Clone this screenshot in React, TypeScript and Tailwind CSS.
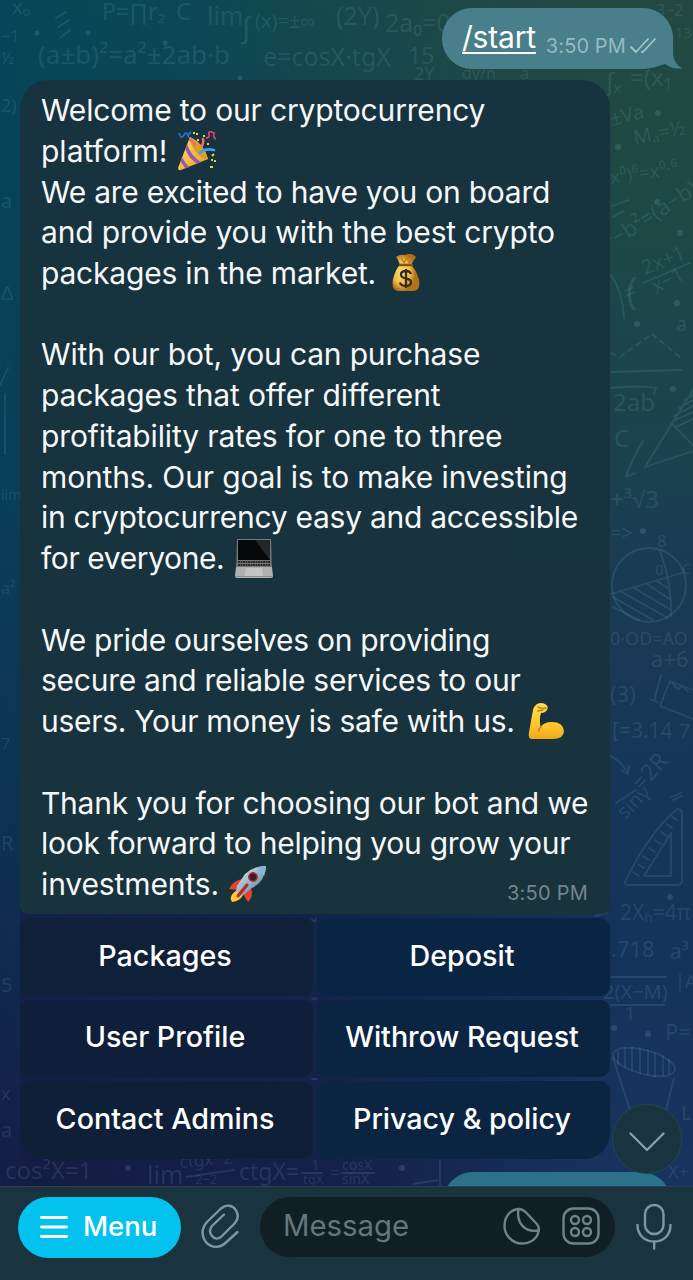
import React from "react";

type Doodle = [x: number, y: number, size: number, text: string, rotate?: number];

const doodles: Doodle[] = [
  [102, 20, 23, "P=∏r₂"],
  [176, 20, 24, "C"],
  [207, 25, 25, "lim"],
  [242, 38, 30, "∫"],
  [255, 28, 20, "(x)=±∞"],
  [336, 25, 25, "(2Y)"],
  [385, 32, 25, "2a₀=0"],
  [38, 64, 26, "(a±b)²=a²±2ab·b"],
  [263, 66, 25, "e=cosX·tgX"],
  [408, 64, 23, "15"],
  [414, 80, 18, "2Y"],
  [462, 79, 16, "dy/n"],
  [520, 79, 16, "a"],
  [630, 86, 24, "=(x₁"],
  [606, 91, 26, "∫ₓ"],
  [675, 38, 15, "13"],
  [656, 16, 16, "3−2"],
  [612, 126, 20, "±Va", -14],
  [635, 145, 20, "Mₐ=½", -12],
  [611, 184, 19, "x⁰)⁶=x⁰·⁶", -8],
  [611, 250, 22, "²−b²=(a−b)", -33],
  [626, 304, 38, "("],
  [645, 275, 20, "2x+1", -22],
  [656, 294, 20, "x−1", -28],
  [676, 331, 20, "a"],
  [613, 411, 24, "2ab"],
  [614, 447, 24, "C"],
  [610, 508, 24, "+³√3"],
  [610, 540, 20, "=>"],
  [657, 547, 17, "8"],
  [682, 574, 14, "C"],
  [655, 575, 15, "0"],
  [610, 645, 18, "0·OD=AO"],
  [651, 667, 22, "a+6"],
  [610, 702, 22, "(3)"],
  [612, 738, 21, "[=3.14"],
  [679, 738, 20, "7"],
  [642, 792, 23, "=2R", -48],
  [625, 820, 20, "sinγ", -45],
  [620, 920, 21, "2Xₕ=4π"],
  [611, 957, 22, ".718"],
  [670, 959, 21, "a³"],
  [603, 999, 20, "2(X−M)"],
  [675, 988, 18, "|A"],
  [625, 1020, 18, "1"],
  [665, 1040, 22, "P="],
  [668, 1178, 18, "X+"],
  [681, 1120, 20, "L"],
  [5, 1179, 24, "cos²X=1"],
  [147, 1184, 25, "lim"],
  [180, 1168, 17, "ctgx−2", -5],
  [195, 1184, 13, "2−2"],
  [239, 1180, 23, "ctgX="],
  [311, 1170, 15, "1"],
  [303, 1184, 13, "tgX"],
  [330, 1179, 18, "="],
  [342, 1170, 14, "cosX"],
  [342, 1184, 14, "sinX"],
  [12, 14, 20, "xₒ"],
  [1, 42, 16, "−1"],
  [1, 64, 17, "½"],
  [1, 112, 18, "2)"],
  [1, 208, 20, "a"],
  [1, 300, 20, "∆"],
  [1, 500, 14, "lim"],
  [1, 594, 16, "a²"],
  [1, 750, 16, "7"],
  [1, 850, 20, "R"],
  [1, 992, 20, "5"],
  [1, 1100, 18, "x"],
  [1, 1137, 20, "a"],
];

function Wallpaper() {
  return (
    <svg className="absolute inset-0 h-full w-full" viewBox="0 0 693 1280" aria-hidden="true">
      <defs>
        <linearGradient id="base" x1="0" y1="0" x2="0" y2="1">
          <stop offset="0" stopColor="#05485a" />
          <stop offset="0.4" stopColor="#0a3e58" />
          <stop offset="0.7" stopColor="#102e51" />
          <stop offset="0.93" stopColor="#161c45" />
        </linearGradient>
        <linearGradient id="side" x1="0" y1="0" x2="0" y2="1">
          <stop offset="0" stopColor="#234941" />
          <stop offset="0.18" stopColor="#1d4846" />
          <stop offset="0.36" stopColor="#1b414e" />
          <stop offset="0.5" stopColor="#193956" />
          <stop offset="0.7" stopColor="#14345a" />
          <stop offset="0.93" stopColor="#17335f" />
        </linearGradient>
        <linearGradient id="fade" x1="0" y1="0" x2="1" y2="0">
          <stop offset="0" stopColor="#000" />
          <stop offset="0.25" stopColor="#333" />
          <stop offset="0.7" stopColor="#ddd" />
          <stop offset="0.85" stopColor="#fff" />
        </linearGradient>
        <linearGradient id="dusk" x1="0" y1="0" x2="1" y2="0">
          <stop offset="0" stopColor="#141a42" stopOpacity="0.5" />
          <stop offset="0.45" stopColor="#141c42" stopOpacity="0.6" />
          <stop offset="0.8" stopColor="#141c42" stopOpacity="0.15" />
          <stop offset="0.9" stopColor="#141c42" stopOpacity="0" />
        </linearGradient>
        <mask id="blend"><rect width="693" height="1280" fill="url(#fade)" /></mask>
      </defs>
      <rect width="693" height="1280" fill="url(#base)" />
      <rect width="693" height="1280" fill="url(#side)" mask="url(#blend)" />
      <rect x="20" y="900" width="673" height="380" fill="url(#dusk)" />
      <g fill="#79b5bd" fillOpacity="0.17" className="font-['Noto_Sans',sans-serif]">
        {doodles.map(([x, y, size, text, rotate = 0], i) => (
          <text key={i} x={x} y={y} fontSize={size} transform={`rotate(${rotate} ${x} ${y})`}>{text}</text>
        ))}
      </g>
      <g fill="none" stroke="#79b5d0" strokeOpacity="0.16" strokeWidth="1.8" strokeLinecap="round" strokeLinejoin="round">
        <path d="M56 18l10-6M58 27l11-7M61 37l9-7M612 206l17-6M613 217l10-6M643 283l47-20M611 275q12 17 13 43M625 291l8-4M626 296l8-4" />
        <path d="M611 353l9 4 32-23 28 23" strokeDasharray="5 5" />
        <path d="M611 372l70-2M611 388q30-3 45 0l-2 6M643 441q-9 14-17 36m2-7-2 7 9-4" />
        <path d="M693 390L645 467l48-16M671 423l22 22M674 416l19-10M679 408l14-8M684 400l9-5M673 421l20-9M676 427l17-8" />
        <circle cx="649" cy="585" r="37" />
        <path d="M611 594l71-21M660 551q12 32 11 65M634 588l37 22M620 591l48 27M647 584l24 16M657 581l12 8M613 597l40 23M613 607l26 13" />
        <path d="M693 690l-23-9-10 25 33 13M661 675l-7 26m-4-2 7 3M671 682l7 7 5-3 5 6" />
        <path d="M611 756q12 7 17 18l-6-3m6 3 1-8M616 803l20-13M671 797l10-4M673 800l9-4" />
        <path d="M625 882q23-48 52-73q5 0 5 5v66q0 5-5 5h-48q-5 0-4-3zM644 876l27-43v43z" />
        <path d="M633 872l6 4M638 864l6 4M643 856l6 4M649 848l6 4M655 840l6 4M661 832l6 4M667 824l5 4M672 817l5 3" />
        <path d="M611 977h55M611 1005h53" />
        <ellipse cx="644" cy="1062" rx="32" ry="12" transform="rotate(15 644 1062)" />
        <path d="M618 1051v13M625 1048v19M632 1047v23M640 1048v25M648 1050v25M655 1053v24M663 1056v20M669 1060v14M674 1078l-11 44M613 1058l18 55" />
        <path d="M8 368l-8 17M5 394v60M186 1177l48-7M302 1173h20M342 1173h32M414 1184l24-4M440 1160v28" />
        <path d="M312 919q3 5 4 0M312 998q3 3 4 0M312 1079h5M595 916l12-3" />
      </g>
      <g fill="#79b5c0" fillOpacity="0.2">
        <circle cx="37" cy="33" r="2.5" /><circle cx="88" cy="33" r="2.5" /><circle cx="165" cy="43" r="2.5" /><circle cx="240" cy="78" r="2.5" />
        <circle cx="658" cy="113" r="3" /><circle cx="618" cy="147" r="3" /><circle cx="657" cy="202" r="3" />
        <circle cx="680" cy="233" r="3" /><circle cx="677" cy="303" r="3" /><circle cx="637" cy="324" r="3" />
        <circle cx="673" cy="389" r="3" /><circle cx="643" cy="531" r="3" /><circle cx="670" cy="897" r="3" />
        <circle cx="614" cy="1028" r="3" /><circle cx="648" cy="1034" r="3" /><circle cx="128" cy="1168" r="3" />
        <circle cx="402" cy="1168" r="3" />
      </g>
    </svg>
  );
}

function PartyPopper() {
  return (
    <svg className="h-[40px] w-[40px]" viewBox="0 0 40 40">
      <defs><linearGradient id="cone" x1="0" y1="0" x2="1" y2="1"><stop stopColor="#ffe16b" /><stop offset="1" stopColor="#e79b1b" /></linearGradient></defs>
      <path d="M13 6L1 37q0 3 3 2l27-11Q27 13 13 6z" fill="url(#cone)" />
      <path d="M13 6Q27 12 31 28q-5 2-12-7T13 6z" fill="#d99d30" />
      <path d="M10 13q4 12 14 18l-4 1.500Q11 27 8.500 18zM5 26q3 6 7 10l-3.500 1.500-5-7z" fill="#9855b8" />
      <path d="M18 14q-2-4-5-5M25 15q2-4 1-7" fill="none" stroke="#f46a70" strokeWidth="2.500" strokeLinecap="round" />
      <path d="M23 22q5-5 14-3" fill="none" stroke="#469bec" strokeWidth="2.800" strokeLinecap="round" />
      <path d="M2 2q2 7 5 2t5 3M10 5l4-4" fill="none" stroke="#2871c3" strokeWidth="1.800" />
      <path d="M29 7q4 0 3-4t5-1q-1 5 2 6" fill="none" stroke="#d84372" strokeWidth="1.800" />
      <path d="M19 3h2M20 9h2M35 25l2-2M34 29h2M33 36h3M30 13h2" stroke="#f7cf45" strokeWidth="2" />
      <path d="M37 30h2M16 2h2M26 5h2" stroke="#b4e16d" strokeWidth="2" />
    </svg>
  );
}

function MoneyBag() {
  return (
    <svg className="h-[38px] w-[28px]" viewBox="0 0 28 38">
      <defs><radialGradient id="bag" cx=".35" cy=".5"><stop stopColor="#ffe37a" /><stop offset=".65" stopColor="#edba42" /><stop offset="1" stopColor="#ad721a" /></radialGradient></defs>
      <path d="M8 11Q6 5 4 3q4-3 9-2 6-3 11 2-2 3-5 8 5 4 8 15 2 11-6 11H6Q-1 36 1 25 4 14 8 11z" fill="url(#bag)" />
      <path d="M8 11h12" stroke="#875211" strokeWidth="2.500" strokeLinecap="round" />
      <path d="M9 4l3 5 3-6 2 6 3-5" fill="none" stroke="#bc7e25" strokeWidth="1.300" />
      <path d="M19 20q-1-3-5-3-5 0-5 3.500 0 3 5 4t5 3.500q0 4-5 4-5 0-6-3.500M14 15v19" fill="none" stroke="#392a20" strokeWidth="2.300" />
    </svg>
  );
}

function Laptop() {
  return (
    <svg className="h-[40px] w-[38px]" viewBox="0 0 38 40">
      <path d="M2 1h34l1 38H1z" fill="#777a7d" />
      <path d="M3 2h32v20H3z" fill="#07080a" />
      <path d="M20 2h15v20z" fill="#242528" />
      <path d="M3 22h32l2 7H1z" fill="#777" />
      <path d="M3 24h32M3 27h32" stroke="#292a2d" strokeWidth="2" strokeDasharray="2 .5" />
      <path d="M1 29h36l1 9q0 2-2 2H2q-2 0-2-2z" fill="#b0b0b1" />
      <path d="M11 30h16l1 8H10z" fill="#c4c4c5" />
      <path d="M1 38.500h36" stroke="#8c8c8e" />
    </svg>
  );
}

function Biceps() {
  return (
    <svg className="h-[38px] w-[37px]" viewBox="0 0 37 38">
      <defs><linearGradient id="arm" x1="0" y1="0" x2="0" y2="1"><stop stopColor="#ffdc50" /><stop offset=".6" stopColor="#ffc72e" /><stop offset="1" stopColor="#efa71e" /></linearGradient></defs>
      <path d="M9 2q4-2 8 0 4 2 2 6-2 3-6 3-2 5-.5 14Q16 20 24 20q11 0 12 9 0 7-10 8H3Q0 36 1 30L5 8q1-4 4-6z" fill="url(#arm)" />
      <path d="M10 5q4 2 8 1M10 9l5-1M13 25q-3 2-2 4" fill="none" stroke="#c57d1b" strokeWidth="1.400" strokeLinecap="round" />
    </svg>
  );
}

function RocketEmoji() {
  return (
    <svg className="h-[38px] w-[38px]" viewBox="0 0 38 38">
      <defs><linearGradient id="hull" x1="0" y1="0" x2="1" y2="1"><stop stopColor="#e5f1f7" /><stop offset=".55" stopColor="#8faec2" /><stop offset="1" stopColor="#406983" /></linearGradient></defs>
      <path d="M14 14Q4 15 0 24l9 1zM14 29l8-6q3 8-3 14z" fill="#e6422d" />
      <path d="M8 25l6 5q-3 6-11 7Q-1 31 8 25z" fill="#ffca36" />
      <path d="M37 1Q24 1 16 9L8 21l-1 6 6 4 10-8Q36 17 37 1z" fill="url(#hull)" />
      <path d="M37 1q-5 0-9 2l7 8q2-5 2-10z" fill="#89b8d5" />
      <circle cx="24" cy="12" r="4.200" fill="#401c25" stroke="#a8323a" strokeWidth="1.500" />
      <path d="M18 20L9 31" stroke="#b92629" strokeWidth="3" strokeLinecap="round" />
    </svg>
  );
}

const lines: { text: string; track: string; emoji?: React.ReactNode }[] = [
  { text: "Welcome to our cryptocurrency", track: "tracking-[-0.17px]" },
  { text: "platform!", track: "tracking-[0px]", emoji: <PartyPopper /> },
  { text: "We are excited to have you on board", track: "tracking-[-0.25px]" },
  { text: "and provide you with the best crypto", track: "tracking-[-0.16px]" },
  { text: "packages in the market.", track: "tracking-[-0.2px] pr-[6px]", emoji: <MoneyBag /> },
  { text: "", track: "" },
  { text: "With our bot, you can purchase", track: "tracking-[-0.17px]" },
  { text: "packages that offer different", track: "tracking-[-0.13px]" },
  { text: "profitability rates for one to three", track: "tracking-[-0.14px]" },
  { text: "months. Our goal is to make investing", track: "tracking-[-0.14px]" },
  { text: "in cryptocurrency easy and accessible", track: "tracking-[-0.28px]" },
  { text: "for everyone.", track: "tracking-[-0.4px] pr-[1px]", emoji: <Laptop /> },
  { text: "", track: "" },
  { text: "We pride ourselves on providing", track: "tracking-[-0.29px]" },
  { text: "secure and reliable services to our", track: "tracking-[-0.26px]" },
  { text: "users. Your money is safe with us.", track: "tracking-[-0.29px] pr-[3px]", emoji: <Biceps /> },
  { text: "", track: "" },
  { text: "Thank you for choosing our bot and we", track: "tracking-[-0.25px]" },
  { text: "look forward to helping you grow your", track: "tracking-[-0.26px]" },
  { text: "investments.", track: "tracking-[-0.12px]", emoji: <RocketEmoji /> },
];

const actions = [
  { label: "Packages", shape: "rounded-[10px] bg-[#0f2039]" },
  { label: "Deposit", shape: "rounded-[10px] bg-[#0a2544]" },
  { label: "User Profile", shape: "rounded-[10px] bg-[#0f1f39]" },
  { label: "Withrow Request", shape: "rounded-[10px] bg-[#0a2442]" },
  { label: "Contact Admins", shape: "rounded-[10px] rounded-bl-[26px] bg-[#0f1f38]" },
  { label: "Privacy & policy", shape: "rounded-[10px] rounded-br-[26px] bg-[#0a2442]" },
];

export default function App() {
  return (
    <div className="relative flex h-[1280px] w-[693px] flex-col overflow-hidden font-['Inter','Liberation_Sans',sans-serif] text-white">
      <Wallpaper />

      <div className="relative mr-[20px] mt-[8px] flex h-[61px] w-[231px] shrink-0 items-center self-end rounded-[30px] bg-[#487f8a] pl-[20px]">
        <svg className="absolute -right-[9px] bottom-0 h-[34px] w-[30px]" viewBox="0 0 30 34">
          <path d="M21 0v19q1 10 9 14-8 2-17-4L0 33V0z" fill="#487f8a" />
        </svg>
        <span className="relative -mt-[4px] text-[30px] leading-none tracking-[-0.2px] underline decoration-2 underline-offset-[4px]">/start</span>
        <span className="relative ml-[10px] mt-[15px] whitespace-nowrap text-[20px] leading-none tracking-[0.1px] text-[#95bbc1]">3:50 PM</span>
        <svg className="relative ml-[4px] mt-[14px] h-[16px] w-[27px]" viewBox="0 0 27 16" fill="none" stroke="#a3c6cb" strokeWidth="1.800" strokeLinecap="round" strokeLinejoin="round">
          <path d="M1 9l5 5L18 1M12 14l1 0L25 1" />
        </svg>
      </div>

      <div className="relative ml-[20px] mt-[11px] h-[834px] w-[590px] shrink-0 rounded-b-[8px] rounded-t-[28px] bg-linear-to-b from-[#17333f] to-[#18333c] pl-[21px] pt-[9.700px]">
        {lines.map(({ text, track, emoji }, i) => (
          <div key={i} className="flex h-[40.74px] items-center whitespace-pre text-[30px] leading-none text-[#f5f8f9]">
            <span className={track}>{text}</span>
            {emoji && <span className="ml-[10px]">{emoji}</span>}
          </div>
        ))}
        <span className="absolute bottom-[11px] right-[22px] text-[20px] leading-none tracking-[0.25px] text-[#74868c]">3:50 PM</span>
      </div>

      <div className="relative ml-[20px] mt-[4px] grid w-[590px] shrink-0 grid-cols-2 gap-[4px]">
        {actions.map(({ label, shape }) => (
          <button key={label} className={`flex h-[77.500px] items-center justify-center pb-[1px] pr-[3px] text-[28.700px] font-medium leading-none tracking-[-0.02px] ${shape}`}>
            {label}
          </button>
        ))}
      </div>

      <div className="relative ml-[443px] mt-[13px] h-[14px] w-[228px] shrink-0 overflow-hidden">
        <div className="h-[60px] rounded-[30px] bg-[#2b7189]" />
      </div>

      <button aria-label="Scroll to latest" className="absolute left-[612px] top-[1104px] flex h-[70px] w-[70px] items-center justify-center rounded-full border border-[#23454e] bg-[#1a343f]">
        <svg className="mt-[6px] h-[20px] w-[36px]" viewBox="0 0 36 20" fill="none" stroke="#8aa5ad" strokeWidth="2.200" strokeLinecap="round" strokeLinejoin="round">
          <path d="M1.500 1.500L18 18 34.500 1.500" />
        </svg>
      </button>

      <footer className="relative mt-auto flex h-[95px] shrink-0 items-start border-t border-[#29404e] bg-[#1a343f] pl-[18px] pt-[10.500px]">
        <button className="flex h-[61px] w-[163px] items-center rounded-full bg-[#04c2ee] pb-[1px] pl-[21.500px] text-[27.500px] font-medium leading-none">
          <svg className="mr-[15.500px] h-[24px] w-[28px]" viewBox="0 0 28 24" stroke="white" strokeWidth="2.800" strokeLinecap="round">
            <path d="M1.500 2.500h25M1.500 12h25M1.500 21.500h25" />
          </svg>
          Menu
        </button>
        <svg className="ml-[19px] mt-[7px] h-[45px] w-[40px]" viewBox="0 0 40 45" fill="none" stroke="#7f98a0" strokeWidth="2.400" strokeLinecap="round" strokeLinejoin="round">
          <path d="M37.500 28L26 38.500C18 46 8 43 4 35Q0 26 7 18L21 4.500C26 0 33 1 36 6.500Q40 13 35 19L21.500 32.500Q16 37 12 32 8 27 12 22L24 10.500" />
        </svg>
        <div className="ml-[19.500px] flex h-[60px] w-[355px] items-center rounded-full bg-[#101f24] pb-[2px] pl-[23.500px]">
          <span className="w-[220px] text-[29.300px] leading-none text-[#65767c]">Message</span>
          <svg className="h-[38px] w-[38px]" viewBox="0 0 38 38" fill="none" stroke="#6f8488" strokeWidth="2.400" strokeLinecap="round" strokeLinejoin="round">
            <path d="M15.500 2C7 2.500 1.500 10 1.500 19S9 36.500 19 36.500c9 0 15-5 16.500-12 1-5-1-7-4-10L24 6.500Q20 2 15.500 2z" />
            <path d="M15.500 2C13 16 22 26 35.500 23.500" />
          </svg>
          <svg className="ml-[21px] h-[38px] w-[38px]" viewBox="0 0 38 38" fill="none" stroke="#6f8488" strokeWidth="2.400">
            <rect x="1.500" y="1.500" width="35" height="35" rx="10" />
            <circle cx="13" cy="13" r="4" /><circle cx="25" cy="13" r="4" />
            <circle cx="13" cy="25" r="4" /><circle cx="25" cy="25" r="4" />
          </svg>
        </div>
        <svg className="ml-[21px] mt-[6px] h-[48px] w-[36px]" viewBox="0 0 36 48" fill="none" stroke="#7f98a0" strokeWidth="2.400" strokeLinecap="round">
          <rect x="9" y="2" width="18.500" height="29" rx="9.250" />
          <path d="M1.500 22c0 10 7 16.500 16.700 16.500S34.500 32 34.500 22M18.200 38.500v7" />
        </svg>
      </footer>
    </div>
  );
}
